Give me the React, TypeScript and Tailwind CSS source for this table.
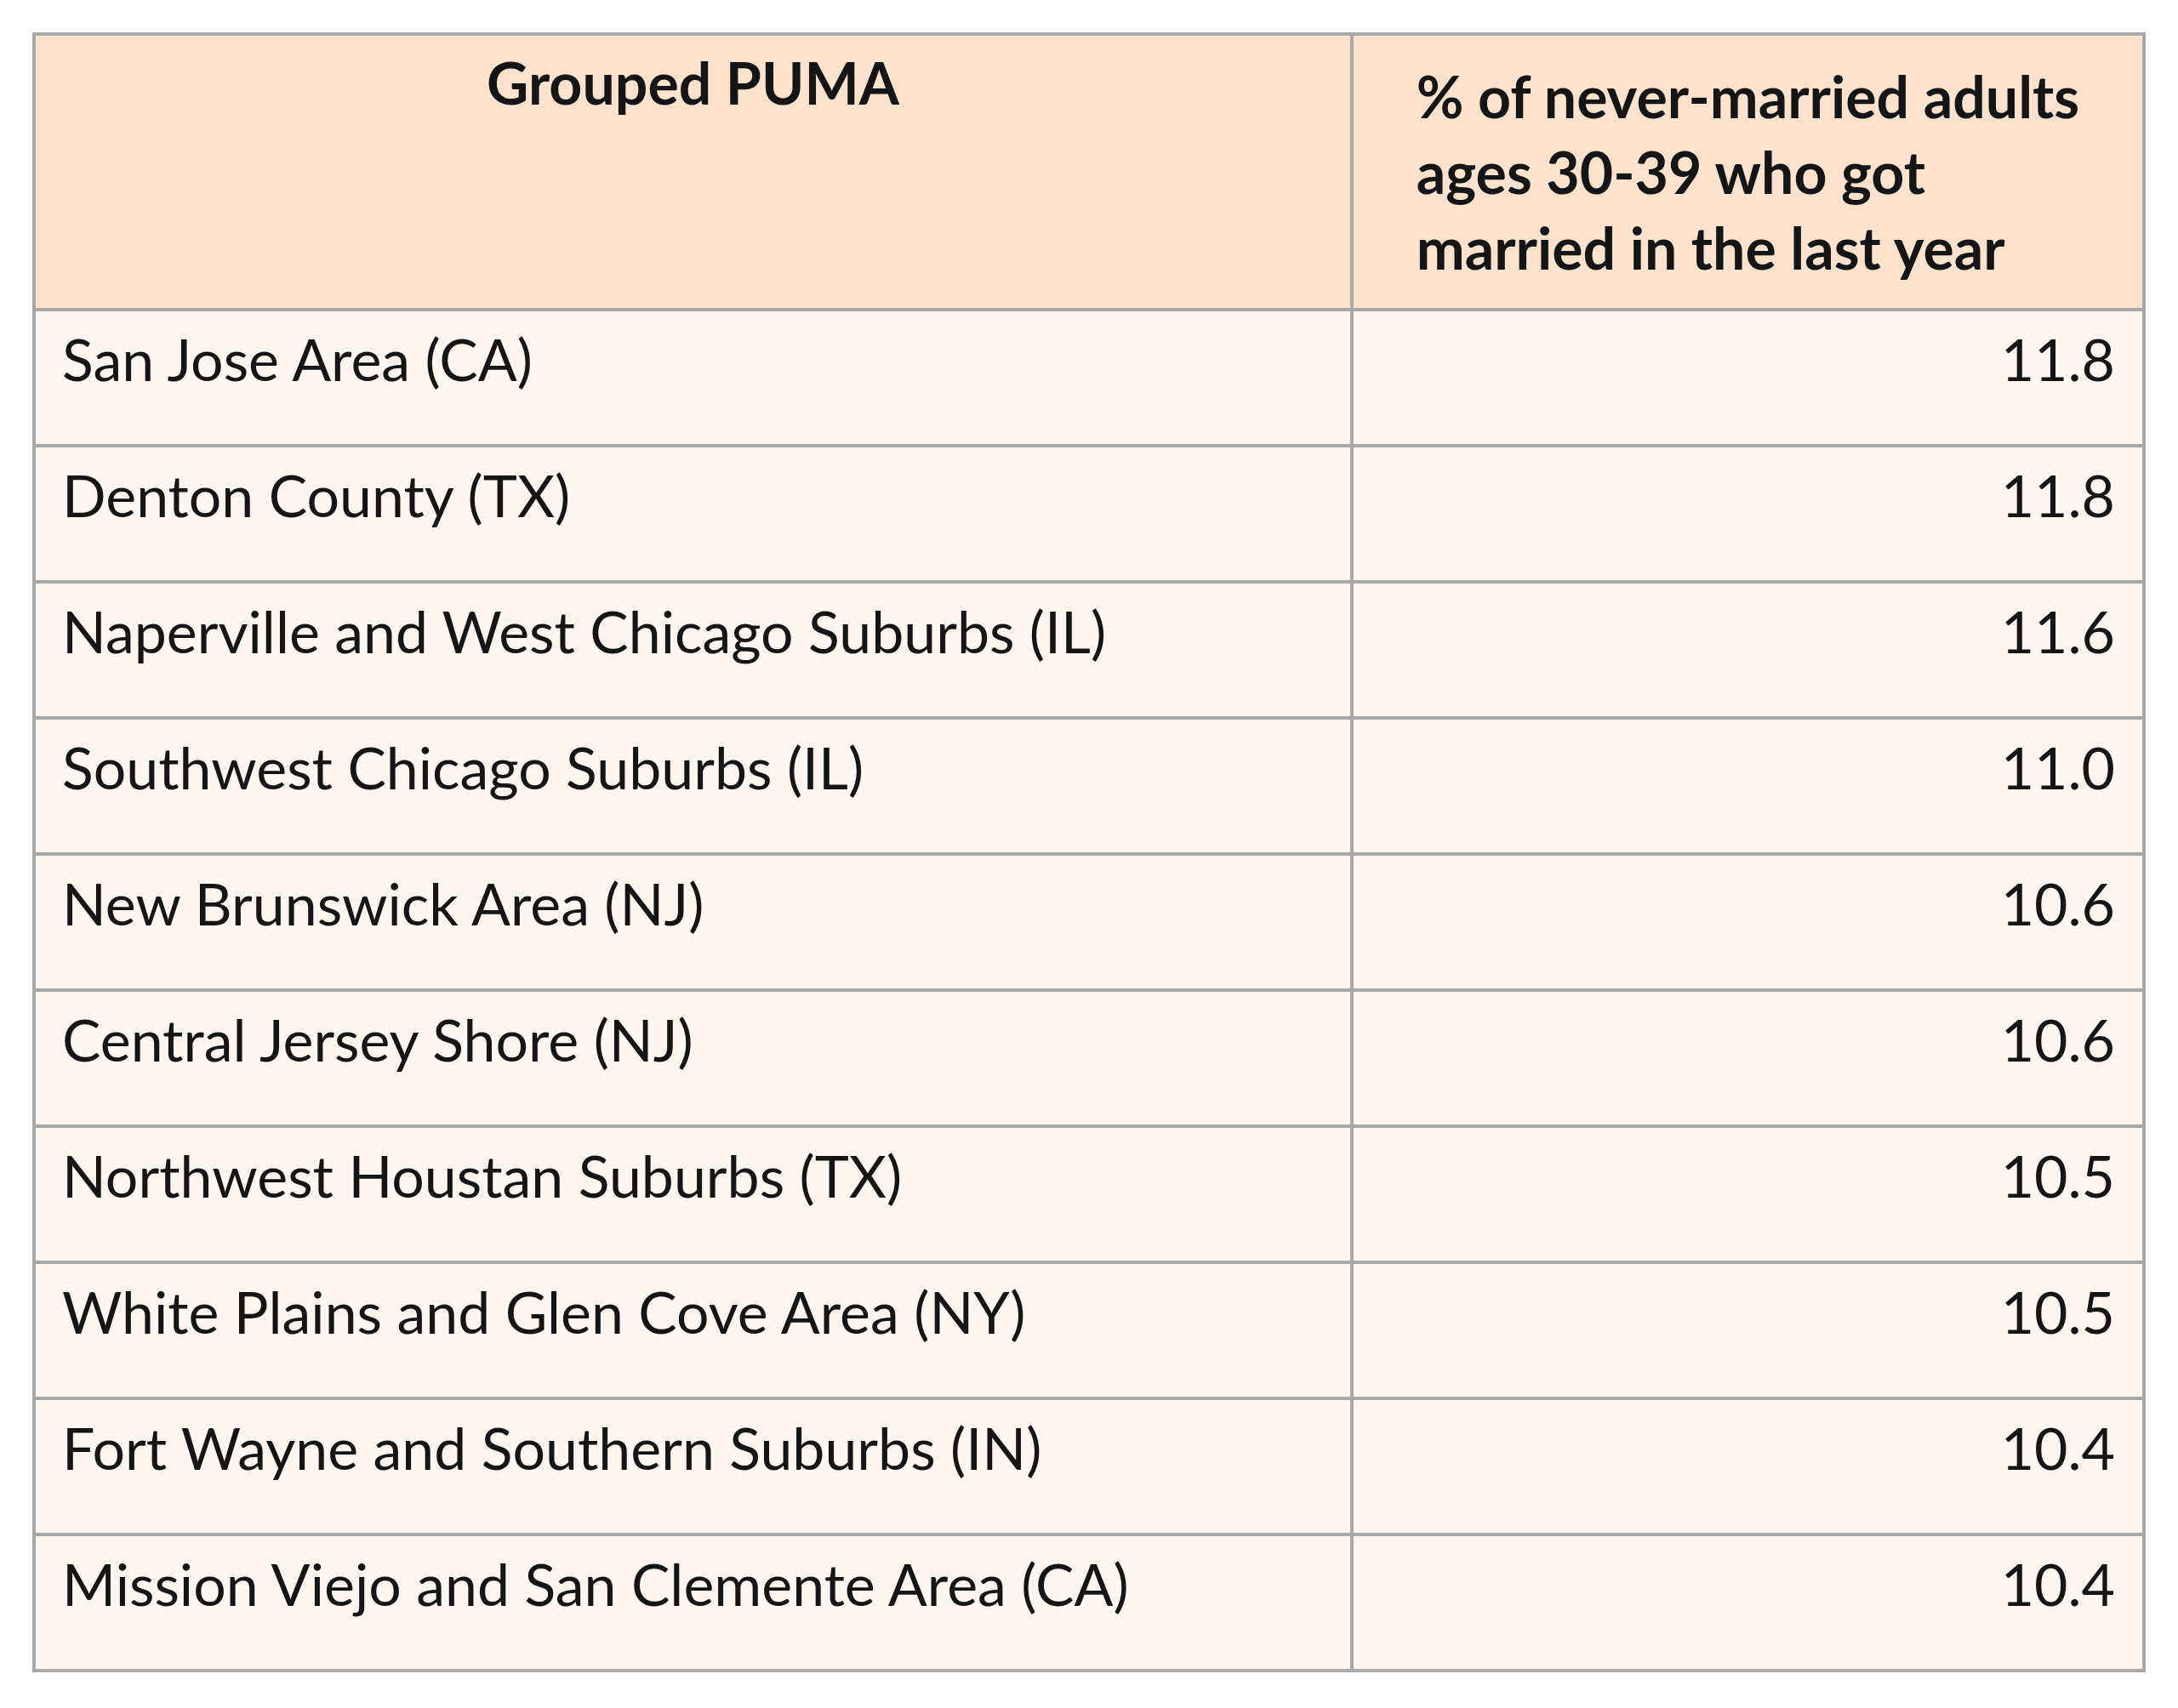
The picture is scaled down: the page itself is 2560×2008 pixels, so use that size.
const rows: [string, string][] = [
  ["San Jose Area (CA)", "11.8"],
  ["Denton County (TX)", "11.8"],
  ["Naperville and West Chicago Suburbs (IL)", "11.6"],
  ["Southwest Chicago Suburbs (IL)", "11.0"],
  ["New Brunswick Area (NJ)", "10.6"],
  ["Central Jersey Shore (NJ)", "10.6"],
  ["Northwest Houstan Suburbs (TX)", "10.5"],
  ["White Plains and Glen Cove Area (NY)", "10.5"],
  ["Fort Wayne and Southern Suburbs (IN)", "10.4"],
  ["Mission Viejo and San Clemente Area (CA)", "10.4"],
];

export default function App() {
  return (
    <div className="min-h-[2008px] w-[2560px] bg-white pt-[38px] pl-[38px] font-['Lato',sans-serif] text-[68px] leading-[89px] text-[#151515]">
      {/* table: grey background shows through the gaps as cell borders */}
      <div className="grid w-[2484px] grid-cols-[1545px_927px] gap-[4px] bg-[#a9a9a9] p-[4px]">
        {/* header */}
        <div className="h-[320px] bg-[#fde2ce] pt-[10px] text-center font-bold">
          Grouped PUMA
        </div>
        <div className="flex h-[320px] justify-center bg-[#fde2ce] pt-[26px] font-bold">
          <p className="text-left">
            % of never-married adults
            <br />
            ages 30-39 who got
            <br />
            married in the last year
          </p>
        </div>

        {/* body rows */}
        {rows.map(([name, value], i) => (
          <div key={i} className="contents">
            <div className="h-[156px] bg-[#fdf6f1] pt-[11px] pl-[31px]">{name}</div>
            <div className="h-[156px] bg-[#fdf6f1] pt-[11px] pr-[32px] text-right">{value}</div>
          </div>
        ))}
      </div>
    </div>
  );
}
